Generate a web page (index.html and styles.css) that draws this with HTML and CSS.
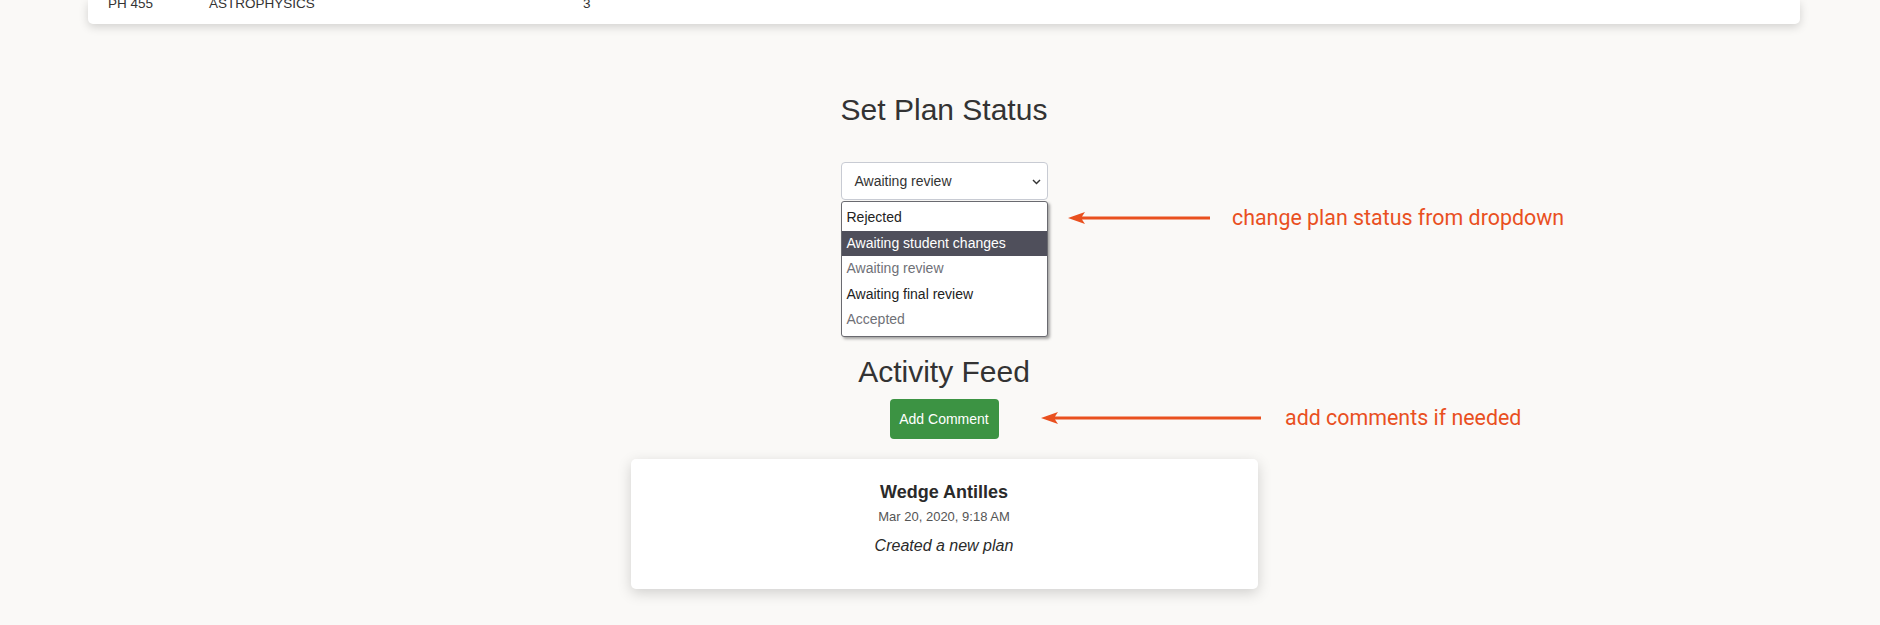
FILE: index.html
```html
<!DOCTYPE html>
<html lang="en">
<head>
<meta charset="utf-8">
<title>Set Plan Status</title>
<link rel="stylesheet" href="styles.css">
</head>
<body>
<div class="page">
  <div class="course-card">
    <div class="course-row">
      <span class="col-code">PH 455</span>
      <span class="col-name">ASTROPHYSICS</span>
      <span class="col-credits">3</span>
    </div>
  </div>

  <main class="main">
    <h1 class="heading">Set Plan Status</h1>
    <div class="select-wrap">
      <div class="select">
        <span class="select-value">Awaiting review</span>
        <svg class="chevron" width="9" height="6" viewBox="0 0 9 6"><path d="M1 1 L4.5 4.6 L8 1" fill="none" stroke="#333" stroke-width="1.4"/></svg>
      </div>
      <ul class="options">
        <li class="option">Rejected</li>
        <li class="option selected">Awaiting student changes</li>
        <li class="option muted">Awaiting review</li>
        <li class="option">Awaiting final review</li>
        <li class="option muted">Accepted</li>
      </ul>
    </div>

    <h2 class="heading">Activity Feed</h2>
    <button class="btn-add">Add Comment</button>

    <div class="feed-card">
      <div class="feed-name">Wedge Antilles</div>
      <div class="feed-date">Mar 20, 2020, 9:18 AM</div>
      <div class="feed-text">Created a new plan</div>
    </div>
  </main>

  <div class="annotation annotation-status">
    <svg class="arrow" width="142" height="12" viewBox="0 0 142 12"><polygon points="0,6 17,0 14,4.5 142,4.5 142,7.5 14,7.5 17,12" fill="#e9501f"/></svg>
    <span class="annotation-text">change plan status from dropdown</span>
  </div>
  <div class="annotation annotation-comment">
    <svg class="arrow" width="220" height="12" viewBox="0 0 220 12"><polygon points="0,6 17,0 14,4.5 220,4.5 220,7.5 14,7.5 17,12" fill="#e9501f"/></svg>
    <span class="annotation-text">add comments if needed</span>
  </div>
</div>
</body>
</html>
```

FILE: styles.css
```css
* { box-sizing: border-box; }

html, body {
  margin: 0;
  padding: 0;
  background: #faf9f7;
}

body {
  font-family: "Liberation Sans", Arial, sans-serif;
  color: #333;
}

.page {
  position: relative;
  width: 1880px;
  height: 625px;
  overflow: hidden;
}

.course-card {
  margin: 0 80px 0 88px;
  height: 24px;
  background: #fff;
  border-radius: 0 0 5px 5px;
  box-shadow: 0 3px 10px rgba(0, 0, 0, 0.16);
  overflow: hidden;
}

.course-row {
  display: flex;
  margin-top: -4px;
  padding-left: 20px;
  font-size: 13.5px;
  line-height: 16px;
  color: #333;
  text-transform: uppercase;
}

.col-code { width: 101px; }
.col-name { width: 374px; }

.main {
  display: flex;
  flex-direction: column;
  align-items: center;
  padding: 0 80px 0 88px;
}

.heading {
  margin: 69px 0 0;
  font-size: 30px;
  line-height: 34px;
  font-weight: normal;
  color: #333;
}

h2.heading { margin-top: 155px; }

.select-wrap {
  position: relative;
  margin-top: 35px;
  width: 207px;
  height: 38px;
}

.select {
  display: flex;
  align-items: center;
  justify-content: space-between;
  height: 38px;
  padding: 0 6px 0 13px;
  background: #fff;
  border: 1px solid #c8cbd3;
  border-radius: 4px;
  font-size: 14px;
  color: #333;
}

.chevron { display: block; margin-top: 1px; }

.options {
  position: absolute;
  left: 0;
  top: 39px;
  width: 207px;
  margin: 0;
  padding: 3px 0;
  list-style: none;
  background: #fff;
  border: 1px solid #6a6a70;
  border-radius: 3px;
  box-shadow: 2px 2px 3px rgba(0, 0, 0, 0.35);
  z-index: 2;
}

.option {
  height: 25.6px;
  line-height: 25.6px;
  padding-left: 5px;
  font-size: 14px;
  color: #222;
  white-space: nowrap;
}

.option.selected {
  background: #4f4f5b;
  color: #fff;
}

.option.muted { color: #6f7177; }

.btn-add {
  margin-top: 10px;
  width: 109px;
  height: 40px;
  padding: 0;
  border: none;
  border-radius: 4px;
  background: #3c9343;
  color: #fff;
  font-family: "Liberation Sans", Arial, sans-serif;
  font-size: 14px;
}

.feed-card {
  margin-top: 20px;
  width: 627px;
  height: 130px;
  padding-top: 23px;
  background: #fff;
  border-radius: 5px;
  box-shadow: 0 4px 14px rgba(0, 0, 0, 0.17);
  text-align: center;
}

.feed-name {
  font-size: 18px;
  line-height: 21px;
  font-weight: bold;
  color: #2a2a2a;
}

.feed-date {
  margin-top: 6px;
  font-size: 13px;
  line-height: 15px;
  color: #555;
}

.feed-text {
  margin-top: 13px;
  font-size: 16px;
  line-height: 18px;
  font-style: italic;
  color: #2a2a2a;
}

.annotation {
  position: absolute;
  display: flex;
  align-items: center;
  height: 24px;
}

.annotation-status { left: 1068px; top: 206px; gap: 22px; }
.annotation-comment { left: 1041px; top: 406px; gap: 24px; }

.arrow { display: block; }

.annotation-text {
  font-family: Roboto, "Noto Sans", sans-serif;
  font-size: 21.4px;
  line-height: 24px;
  color: #e9501f;
  white-space: nowrap;
}
```
